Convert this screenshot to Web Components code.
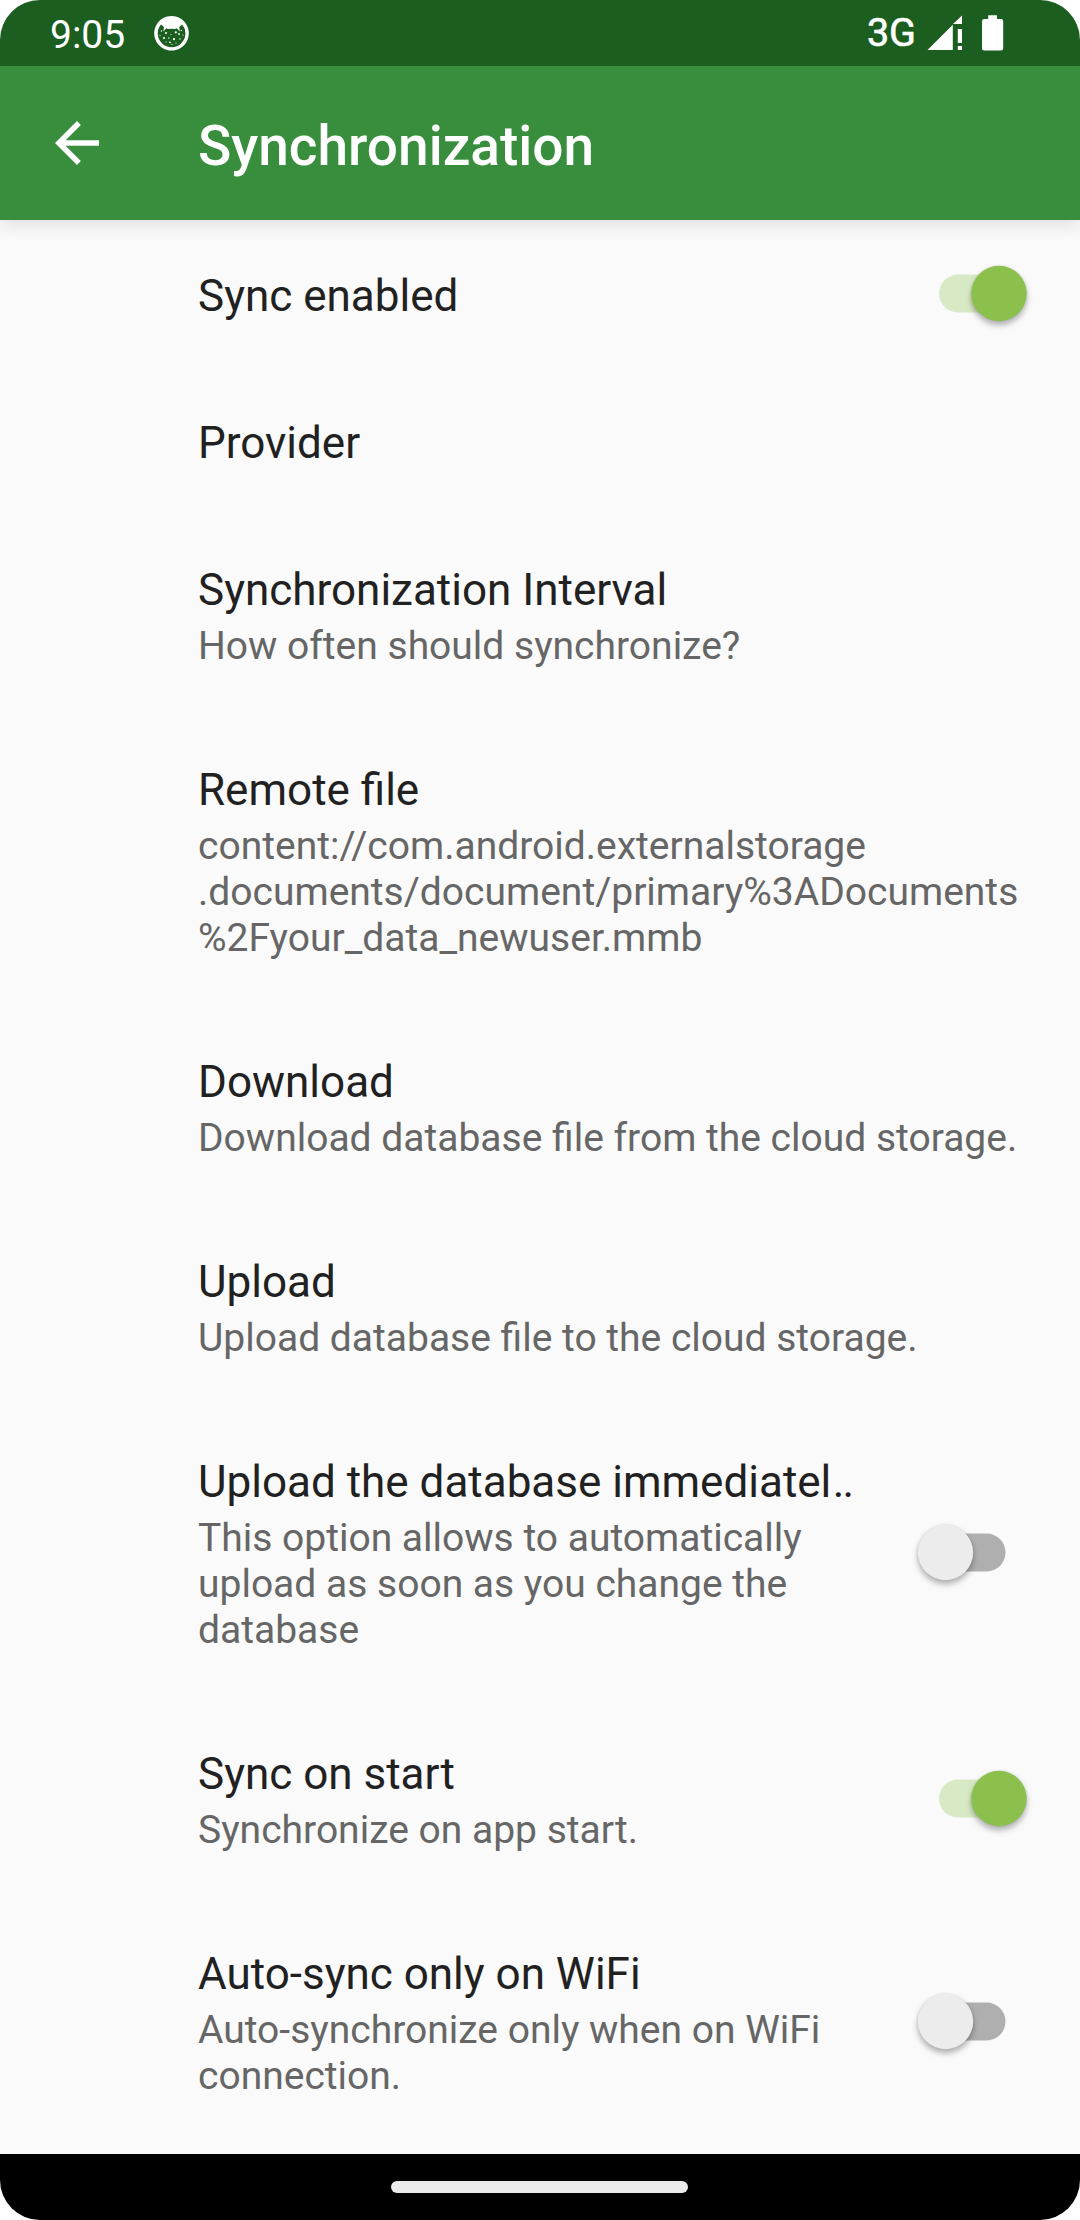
<!DOCTYPE html>
<html lang="en">
<head>
<meta charset="utf-8">
<title>Synchronization</title>
<style>
html,body{margin:0;padding:0;background:#fff}
body{width:1080px;height:2220px;overflow:hidden;font-family:Roboto,"Noto Sans",sans-serif}
.cut{letter-spacing:-2px;margin-left:1.5px}
</style>
</head>
<body>
<phone-screen>
  <status-bar slot="top" time="9:05" network="3G"></status-bar>
  <app-toolbar slot="top">Synchronization</app-toolbar>
  <pref-row switch="on">Sync enabled</pref-row>
  <pref-row>Provider</pref-row>
  <pref-row>Synchronization Interval<span slot="summary">How often should synchronize?</span></pref-row>
  <pref-row>Remote file<span slot="summary">content://com.android.externalstorage<br>.documents/document/primary%3ADocuments<br>%2Fyour_data_newuser.mmb</span></pref-row>
  <pref-row>Download<span slot="summary">Download database file from the cloud storage.</span></pref-row>
  <pref-row>Upload<span slot="summary">Upload database file to the cloud storage.</span></pref-row>
  <pref-row switch="off">Upload the database immediatel<span class="cut">..</span><span slot="summary">This option allows to automatically<br>upload as soon as you change the<br>database</span></pref-row>
  <pref-row switch="on">Sync on start<span slot="summary">Synchronize on app start.</span></pref-row>
  <pref-row switch="off">Auto-sync only on WiFi<span slot="summary">Auto-synchronize only when on WiFi<br>connection.</span></pref-row>
  <nav-bar slot="bottom"></nav-bar>
</phone-screen>
<script>
const define = (name, html, setup) => customElements.define(name, class extends HTMLElement {
  constructor() {
    super();
    this.attachShadow({mode: 'open'}).innerHTML = html;
  }
  connectedCallback() { if (setup) setup(this, this.shadowRoot); }
});

define('phone-screen', `
<style>
:host{display:flex;flex-direction:column;width:1080px;height:2220px;border-radius:40px;overflow:hidden;background:#fafafa}
.top{display:flex;flex-direction:column;flex:none;position:relative;z-index:1}
main{flex:1;min-height:0;overflow:hidden;display:flex;flex-direction:column}
</style>
<div class="top"><slot name="top"></slot></div>
<main><slot></slot></main>
<slot name="bottom"></slot>`);

define('status-bar', `
<style>
:host{display:flex;align-items:flex-start;justify-content:space-between;box-sizing:border-box;height:66px;padding:0 76px 0 50px;background:#1b5e20;color:#fff;position:relative;z-index:1}
div{display:flex}
.time{font-size:39px;line-height:46px;margin-top:12px;width:104px;white-space:nowrap}
.net{font-size:39.5px;line-height:46px;margin-top:10px;-webkit-text-stroke:.6px #fff;white-space:nowrap}
svg{display:block;fill:#fff}
.face{margin-top:15px}
.sig{margin:15px 0 0 10px}
.bat{margin:15px 0 0 20px}
</style>
<div><span class="time"></span>
<svg class="face" width="36" height="36" viewBox="0 0 36 36">
<path fill-rule="evenodd" d="M17.5 1a17.3 17.3 0 1 0 .01 0zM7 9.5l3 2.6-.7 4.4 3-3.3 1.7.9 3.5-.3 3.7.3 1.7-.9 3 3.3-.7-4.4 3-2.6A13.8 13.8 0 1 1 7 9.5z"/>
<g><circle cx="12" cy="18" r="1"/><circle cx="21.8" cy="17.3" r="1.1"/><circle cx="10" cy="23" r="1.1"/><circle cx="20" cy="24.2" r="1.1"/><circle cx="16" cy="27.3" r=".9"/><circle cx="25" cy="19" r=".9"/><circle cx="26" cy="24" r=".7"/><circle cx="14.8" cy="23" r=".7"/><circle cx="7.4" cy="16" r=".7"/><circle cx="27.4" cy="15.5" r=".7"/><circle cx="17" cy="19.5" r=".6"/><circle cx="12" cy="27" r=".6"/><circle cx="22" cy="28" r=".6"/><circle cx="6" cy="20.5" r=".6"/><circle cx="29" cy="20" r=".6"/><circle cx="18" cy="29.5" r=".6"/></g></svg></div>
<div><span class="net"></span>
<svg class="sig" width="36" height="36" viewBox="0 0 36 36"><path d="M1.5 35 26.8 9.7V35zM27 9 36 .5V9zM31.8 14H36v14h-4.2zM31.8 31H36v4h-4.2z"/></svg>
<svg class="bat" width="22" height="36" viewBox="0 0 22 36"><path d="M6.2 4V.2h8.8V4h4a2.2 2.2 0 0 1 2.2 2.2v27.1a2.2 2.2 0 0 1-2.2 2.2H2.2A2.2 2.2 0 0 1 0 33.3V6.2A2.2 2.2 0 0 1 2.2 4z"/></svg></div>`,
(el, root) => {
  root.querySelector('.time').textContent = el.getAttribute('time');
  root.querySelector('.net').textContent = el.getAttribute('network');
});

define('app-toolbar', `
<style>
:host{display:flex;align-items:center;box-sizing:border-box;height:154px;padding-left:44px;background:#388e3c;color:#fff;box-shadow:0 4px 18px rgba(0,0,0,.12)}
svg{display:block;width:66px;height:66px;fill:#fff;margin-right:88px}
h1{margin:6px 0 0;font-size:55px;line-height:66px;font-weight:500;white-space:nowrap}
</style>
<svg viewBox="0 0 24 24"><path d="M20 11H7.83l5.59-5.59L12 4l-8 8 8 8 1.41-1.41L7.83 13H20v-2z"/></svg>
<h1><slot></slot></h1>`);

define('pref-switch', `
<style>
:host{display:block;flex:none;width:87px;height:55px}
svg{display:block;overflow:visible}
.thumb{filter:drop-shadow(0 4px 3px rgba(0,0,0,.28)) drop-shadow(0 0 1px rgba(0,0,0,.12))}
</style>
<svg width="87" height="55" viewBox="0 0 87 55"><rect class="track" y="8.5" width="82" height="38" rx="19"/><circle class="thumb" cy="27.5" r="27.7"/></svg>`,
(el, root) => {
  const on = el.getAttribute('state') === 'on';
  const track = root.querySelector('.track'), thumb = root.querySelector('.thumb');
  track.setAttribute('x', on ? 0 : 5.5);
  track.setAttribute('fill', on ? '#d8eac5' : '#afafaf');
  thumb.setAttribute('cx', on ? 60 : 27.5);
  thumb.setAttribute('fill', on ? '#8ac04b' : '#ececec');
});

define('pref-row', `
<style>
:host{display:flex;flex:none;align-items:center;justify-content:space-between;box-sizing:border-box;padding:0 54px 0 198px}
:host([switch=off]){padding-right:75px}
.text{padding:47px 0 41px}
.title{font-size:44px;line-height:59px;color:#212121;white-space:nowrap}
.summary{font-size:39px;line-height:46px;color:#666;white-space:nowrap;padding-top:3px;margin-bottom:4px}
.summary[hidden]{display:none}
</style>
<div class="text"><div class="title"><slot></slot></div><div class="summary"><slot name="summary"></slot></div></div>`,
(el, root) => {
  root.querySelector('.summary').hidden = !el.querySelector('[slot=summary]');
  const state = el.getAttribute('switch');
  if (state && !root.querySelector('pref-switch')) {
    const sw = document.createElement('pref-switch');
    sw.setAttribute('state', state);
    root.append(sw);
  }
});

define('nav-bar', `
<style>
:host{display:flex;flex:none;align-items:center;justify-content:center;height:66px;background:#000}
i{display:block;width:297px;height:11.5px;margin-right:1px;border-radius:6px;background:#ebebeb}
</style><i></i>`);
</script>
</body>
</html>
